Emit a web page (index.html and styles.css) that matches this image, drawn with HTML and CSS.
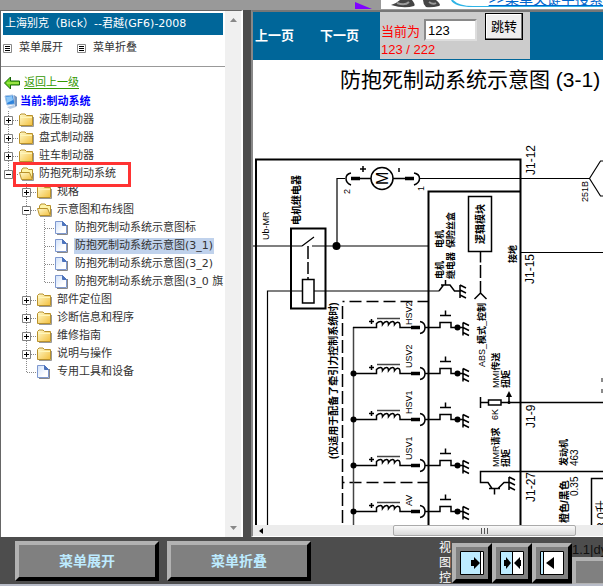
FILE: index.html
```
<!DOCTYPE html>
<html lang="zh-CN">
<head>
<meta charset="utf-8">
<title>防抱死制动系统示意图</title>
<link rel="stylesheet" href="styles.css">
</head>
<body>
<svg class="defs" aria-hidden="true">
  <defs>
    <linearGradient id="gold" x1="0" y1="0" x2="1" y2="1"><stop offset="0" stop-color="#fffbd0"/><stop offset="1" stop-color="#f3bf3c"/></linearGradient>
    <linearGradient id="sheet" x1="0" y1="0" x2="1" y2="1"><stop offset="0" stop-color="#cfe0fa"/><stop offset="0.7" stop-color="#fff"/></linearGradient>
    <symbol id="plus" viewBox="0 0 9 9"><path d="M.5 .5h8v8h-8z" fill="#fff" stroke="#808080"/><path d="M2 4.500h5M4.500 2v5" stroke="#000"/></symbol>
    <symbol id="minus" viewBox="0 0 9 9"><path d="M.5 .5h8v8h-8z" fill="#fff" stroke="#808080"/><path d="M2 4.500h5" stroke="#000"/></symbol>
    <symbol id="folder" viewBox="0 0 16 16"><path d="M2 14.500h12.500V5" fill="none" stroke="#999"/><path d="M.5 13.500v-10l1.500-1.500h4l1.500 1.500h6v10z" fill="url(#gold)" stroke="#b8912c"/><path d="M1 5.500h12" stroke="#fff6b8"/></symbol>
    <symbol id="open" viewBox="0 0 16 16"><path d="M3 14.500h11.500V7" fill="none" stroke="#999"/><path d="M2.500 12v-8l1.500-2h4l1.500 1.500h4v9z" fill="#fff4a6" stroke="#b8912c"/><path d="M.5 6.500h10l3 7h-11z" fill="url(#gold)" stroke="#b8912c"/></symbol>
    <symbol id="page" viewBox="0 0 16 16"><path d="M2 14.500h10.500V5" fill="none" stroke="#888"/><path d="M.5 1.500h7l4 4v8h-11z" fill="url(#sheet)" stroke="#7e98cf"/><path d="M7.500 1.500v4h4z" fill="#4d74bd" stroke="#4d74bd"/></symbol>
    <symbol id="list" viewBox="0 0 9 9"><path d="M.5 .5h8v8h-8z" fill="#fff" stroke="#888"/><path d="M2 2.500h5M2 4.500h5M2 6.500h5" stroke="#000"/></symbol>
  </defs>
</svg>

<header class="banner">
  <svg class="banner-art" viewBox="355 0 248 10" aria-hidden="true">
    <path d="M381 0h222v9H381z" fill="#fff"/>
    <path d="M355 2l17 7h-17z" fill="#8000ff"/>
    <path d="M391 5q6-2 9-5h12q4 5 2 6-10 3-23-1zM423 0h13q6 5 3 6-8 2-13 1-3-3-3-7z" fill="#444"/>
    <path d="M397 3q8 3 12-1M429 2q4 3 7 1" fill="none" stroke="#999" stroke-width="2"/>
    <path d="M453 0q6 6 20 6h130v1H473q-19 0-22-7z" fill="#2fb4e6"/>
  </svg>
  <a class="banner-link" href="#search">&gt;&gt;菜单关键字搜索</a>
</header>

<main class="frames">
  <aside class="menu">
    <div class="menu-body">
      <h2 class="car">上海别克（Bick）--君越(GF6)-2008</h2>
      <div class="tools">
        <button type="button"><svg class="sq"><use href="#list"/></svg>菜单展开</button>
        <button type="button"><svg class="sq"><use href="#list"/></svg>菜单折叠</button>
      </div>
      <div class="back">
        <svg class="ico" viewBox="0 0 16 14"><path d="M.5 7l6-6v4h9v4h-9v4z" fill="#6ad21c" stroke="#17640a"/><path d="M3 7h12" stroke="#c8f46a"/></svg>
        <a href="#up">返回上一级</a>
      </div>
      <div class="current">
        <svg class="ico" viewBox="0 0 16 16"><path d="M1 2l8-1 2 9-8 1z" fill="#2d83dd" stroke="#a7c4e6"/><path d="M2 3l6-1 1 4-6 3z" fill="#8cc7f8"/><path d="M10 1l3 2v9l-2 1z" fill="#7694bd"/><path d="M3 13l7-2 2 2-6 2z" fill="#b9cbe2"/></svg>
        <strong>当前:制动系统</strong>
      </div>
      <ul class="tree">
        <li><div class="row"><button type="button" class="tg" aria-label="展开"><svg class="sq"><use href="#plus"/></svg></button><i></i><svg class="ico"><use href="#folder"/></svg><a href="#a">液压制动器</a></div></li>
        <li><div class="row"><button type="button" class="tg" aria-label="展开"><svg class="sq"><use href="#plus"/></svg></button><i></i><svg class="ico"><use href="#folder"/></svg><a href="#b">盘式制动器</a></div></li>
        <li><div class="row"><button type="button" class="tg" aria-label="展开"><svg class="sq"><use href="#plus"/></svg></button><i></i><svg class="ico"><use href="#folder"/></svg><a href="#c">驻车制动器</a></div></li>
        <li><div class="row marked"><button type="button" class="tg" aria-label="折叠"><svg class="sq"><use href="#minus"/></svg></button><i></i><svg class="ico"><use href="#open"/></svg><a href="#d">防抱死制动系统</a></div>
          <ul>
            <li><div class="row"><button type="button" class="tg" aria-label="展开"><svg class="sq"><use href="#plus"/></svg></button><i></i><svg class="ico"><use href="#folder"/></svg><a href="#e">规格</a></div></li>
            <li><div class="row"><button type="button" class="tg" aria-label="折叠"><svg class="sq"><use href="#minus"/></svg></button><i></i><svg class="ico"><use href="#open"/></svg><a href="#f">示意图和布线图</a></div>
              <ul>
                <li><div class="row leaf"><i></i><svg class="ico"><use href="#page"/></svg><a href="#g">防抱死制动系统示意图标</a></div></li>
                <li><div class="row leaf"><i></i><svg class="ico"><use href="#page"/></svg><a class="on" href="#h">防抱死制动系统示意图(3_1)</a></div></li>
                <li><div class="row leaf"><i></i><svg class="ico"><use href="#page"/></svg><a href="#i">防抱死制动系统示意图(3_2)</a></div></li>
                <li><div class="row leaf"><i></i><svg class="ico"><use href="#page"/></svg><a href="#j">防抱死制动系统示意图(3_0 旗</a></div></li>
              </ul>
            </li>
            <li><div class="row"><button type="button" class="tg" aria-label="展开"><svg class="sq"><use href="#plus"/></svg></button><i></i><svg class="ico"><use href="#folder"/></svg><a href="#k">部件定位图</a></div></li>
            <li><div class="row"><button type="button" class="tg" aria-label="展开"><svg class="sq"><use href="#plus"/></svg></button><i></i><svg class="ico"><use href="#folder"/></svg><a href="#l">诊断信息和程序</a></div></li>
            <li><div class="row"><button type="button" class="tg" aria-label="展开"><svg class="sq"><use href="#plus"/></svg></button><i></i><svg class="ico"><use href="#folder"/></svg><a href="#m">维修指南</a></div></li>
            <li><div class="row"><button type="button" class="tg" aria-label="展开"><svg class="sq"><use href="#plus"/></svg></button><i></i><svg class="ico"><use href="#folder"/></svg><a href="#n">说明与操作</a></div></li>
            <li><div class="row leaf"><i></i><svg class="ico"><use href="#page"/></svg><a href="#o">专用工具和设备</a></div></li>
          </ul>
        </li>
      </ul>
    </div>
    <div class="vbar" aria-hidden="true">
      <svg viewBox="0 0 7 4"><path d="M0 4l3.500-4L7 4z" fill="#888"/></svg>
      <svg viewBox="0 0 7 4"><path d="M0 0l3.500 4L7 0z" fill="#888"/></svg>
    </div>
  </aside>

  <section class="viewer">
    <nav class="pager">
      <a href="#prev">上一页</a>
      <a href="#next">下一页</a>
      <form class="jump">
        <div class="jump-row">
          <label for="page-no">当前为</label>
          <input id="page-no" type="text" value="123">
          <button type="button">跳转</button>
        </div>
        <output>123 / 222</output>
      </form>
    </nav>
    <div class="sheet">
      <h1>防抱死制动系统示意图 (3-1)</h1>
      <svg class="diagram" viewBox="253 108 350 418" role="img" aria-label="防抱死制动系统示意图">
        <defs>
          <g id="gnd"><path d="M0-6V7M0-6l6 3M0-1l6 3M0 4l6 3" fill="none" stroke="#000" stroke-width="1.500"/></g>
          <g id="valve" fill="none" stroke="#000" stroke-width="1.500">
            <path d="M353 0h23.500v-4q2-2 4-2t2 3q2-3 4-3t2 3q2-3 4-3t2 3q2-3 4-2 1.500 0 1.500 4v1h11"/>
            <path d="M377-9h23" stroke="#444"/>
            <path d="M411 0h9" stroke-width="3.500"/>
            <path d="M420-6q5 1 5 6t-5 6M425.500 0H440v-5h11v5h5M440-12h11M445.500-17v5M459 0h4M369-6h5M371.500-8.500v5"/>
            <circle cx="457.500" cy="0" r="3" fill="#000" stroke="none"/>
            <use href="#gnd" x="463" y="1"/>
          </g>
        </defs>
        <g fill="none" stroke="#000" stroke-width="1.500">
          <path d="M256 526V159.500H520.500V526M428.500 526V191.500H520.500" stroke-width="2"/>
          <path d="M253 246h49M302 246l12-9M312 246h116M337 246v-67.500h8M267.500 526V291H302M314 291h125M521 252.500h82M420 178.500h169.500l11-17.500h3M589.500 178.500l11 17.500h3" stroke-width="1.200"/>
          <path d="M291 228.500h34.500v80H291z" stroke-width="2"/>
          <path d="M302.500 279.500h11.500v23.500h-11.500z"/>
          <path d="M308 246v13M308 262v12M308 277v2"/>
          <path d="M351 173q-5 1-5 5.500t5 6.500M360 178.500h11M393 178.500h12M414 173q5.500 1 5.500 5.500t-5.500 6.500M360 169h6M363 166v6M399 168v4"/>
          <path d="M351 178.500h9M405 178.500h9" stroke-width="3.500"/>
          <circle cx="382" cy="178.500" r="11"/>
          <path d="M468.500 196.500h23v55h-23zM480.500 251.500v11M480.500 265v13M480.500 281v12l-6 6M480.500 293l6 6"/>
          <path d="M439 291l4.500-6h-2.500 9l4.500 6h6M445.500 280v5"/>
          <path d="M342.500 301.500h86M342.500 482.500h86" stroke-dasharray="12 5" stroke-dashoffset="10"/>
          <path d="M342.500 306v220" stroke-dasharray="13 4"/>
          <path d="M353.500 327V526" stroke="#444"/>
          <path d="M480.500 397v11M480.500 402.500h8M501 402.500h102M488.500 400h12.500v5h-12.500zM509 402v-7"/>
          <path d="M603 471.500H480.500v11h7.500l4 6h6l6-6h5M489 488.500h11M494.500 488.500v6M603 478.500H591.500V526"/>
          <path d="M602 378v4M602 389v4" stroke="#666"/>
        </g>
        <path d="M506 397l3-6 3 6z"/>
        <circle cx="336.500" cy="246" r="4"/><circle cx="509" cy="402.500" r="1.500"/>
        <circle cx="353.500" cy="373.500" r="3"/><circle cx="353.500" cy="419.500" r="3"/><circle cx="353.500" cy="465.500" r="3"/><circle cx="353.500" cy="511.500" r="3"/>
        <use href="#gnd" x="460" y="291"/><use href="#gnd" x="509" y="483"/>
        <use href="#valve" y="327.500"/><use href="#valve" y="373.500"/><use href="#valve" y="419.500"/><use href="#valve" y="465.500"/><use href="#valve" y="511.500"/>
        <g class="t9">
          <text transform="translate(269 240) rotate(-90)">Ub-MR</text>
          <text transform="translate(350 194) rotate(-90)">2</text>
          <text transform="translate(424 191) rotate(-90)">1</text>
          <text transform="translate(412 325) rotate(-90)">HSV2</text>
          <text transform="translate(412 368) rotate(-90)">USV2</text>
          <text transform="translate(412 414) rotate(-90)">HSV1</text>
          <text transform="translate(412 460) rotate(-90)">USV1</text>
          <text transform="translate(412 506) rotate(-90)">AV</text>
          <text transform="translate(588 202) rotate(-90)">251B</text>
          <text transform="translate(498 420) rotate(-90)">6K</text>
        </g>
        <g class="b9">
          <text transform="translate(443 248) rotate(-90)">电机</text>
          <text transform="translate(454 248) rotate(-90)">保险丝盒</text>
          <text transform="translate(443 279) rotate(-90)">电机</text>
          <text transform="translate(454 279) rotate(-90)">继电器</text>
          <text transform="translate(516 263) rotate(-90)">接地</text>
          <text transform="translate(499 388) rotate(-90)"><tspan class="lat">MMI</tspan>传送</text>
          <text transform="translate(509 388) rotate(-90)">扭矩</text>
          <text transform="translate(485 367) rotate(-90)"><tspan class="lat">ABS_</tspan>模式<tspan class="lat">_</tspan>控制</text>
          <text transform="translate(499 467) rotate(-90)"><tspan class="lat">MMR</tspan>请求</text>
          <text transform="translate(509 467) rotate(-90)">扭矩</text>
          <text transform="translate(567 466) rotate(-90)">发动机</text>
        </g>
        <g class="b10">
          <text transform="translate(300 225) rotate(-90)">电机继电器</text>
          <text transform="translate(484 244) rotate(-90)">逻辑模块</text>
          <text transform="translate(337 459) rotate(-90)">(仅适用于配备了牵引力控制系统时)</text>
          <text transform="translate(568 523) rotate(-90)">橙色/黑色</text>
        </g>
        <g class="t10">
          <text transform="translate(578 466) rotate(-90)">463</text>
          <text transform="translate(578 496) rotate(-90)">0.35</text>
        </g>
        <g class="t12">
          <text transform="translate(606 529) rotate(-90)">3.0升</text>
          <text transform="translate(535 175) rotate(-90)">J1-12</text>
          <text transform="translate(534 284) rotate(-90)">J1-15</text>
          <text transform="translate(535 428) rotate(-90)">J1-9</text>
          <text transform="translate(535 502) rotate(-90)">J1-27</text>
        </g>
        <text class="t16" transform="translate(388 185) rotate(-90)">M</text>
      </svg>
    </div>
    <div class="hbar" aria-hidden="true">
      <svg viewBox="0 0 4 6"><path d="M4 0v6L0 3z" fill="#000"/></svg>
      <span class="thumb"><svg viewBox="0 0 8 6"><path d="M.5 0v6M3.500 0v6M6.500 0v6" stroke="#555"/></svg></span>
    </div>
  </section>
</main>

<footer class="dock">
  <button type="button" class="big">菜单展开</button>
  <button type="button" class="big">菜单折叠</button>
  <div class="views">
    <span class="views-name">视图控</span>
    <button type="button" class="view" aria-label="左侧视图"><svg viewBox="0 0 24 24"><path d="M.5 .5h23v23H.5z" fill="#fff"/><path d="M1 1h19v22H1z" fill="#bdebff"/><path d="M.5 .5h23v23H.5zM20.500 1v22" fill="none" stroke="#000"/><path d="M11 9h3V6l6 6-6 6v-3h-3z"/></svg></button>
    <button type="button" class="view" aria-label="双栏视图"><svg viewBox="0 0 24 24"><path d="M.5 .5h23v23H.5z" fill="#fff"/><path d="M1 1h11v22H1z" fill="#bdebff"/><path d="M.5 .5h23v23H.5zM12.500 1v22" fill="none" stroke="#000"/><path d="M4 9h2V6l5 6-5 6v-3H4zM21 9v6h-1v3l-6-6 6-6v3z"/></svg></button>
    <button type="button" class="view" aria-label="右侧视图"><svg viewBox="0 0 24 24"><path d="M.5 .5h23v23H.5z" fill="#fff"/><path d="M1 1h3v22H1z" fill="#bdebff"/><path d="M.5 .5h23v23H.5zM3.500 1v22" fill="none" stroke="#000"/><path d="M14 9V6l-8 6 8 6v-3h0V18v-3V9z"/><path d="M13 9h1v6h-1z"/></svg></button>
    <div class="version"><span>1.1|dy</span><div class="panel"></div></div>
  </div>
</footer>
</body>
</html>
```
FILE: styles.css
```
*, *::before, *::after { box-sizing: border-box; }

body {
  margin: 0;
  height: 100vh;
  display: grid;
  grid-template-columns: minmax(0, 1fr);
  grid-template-rows: 10px minmax(0, 1fr) 49px;
  overflow: hidden;
  background: #999;
  color: #333;
  font: 11px/18px "DejaVu Sans", "Noto Sans CJK SC", sans-serif;
}

button { margin: 0; padding: 0; color: inherit; font: inherit; }
a { color: inherit; text-decoration: none; white-space: nowrap; }
svg { display: block; flex: none; }
.defs { position: absolute; width: 0; height: 0; }
.sq { width: 9px; height: 9px; }
.ico { width: 16px; height: 16px; }

.banner { position: relative; display: flex; justify-content: flex-end; overflow: hidden; }
.banner-art { width: 248px; height: 10px; }
.banner-link {
  position: absolute;
  right: 0;
  bottom: 3px;
  color: #06c;
  font: 14px/15px "Liberation Sans", "Noto Sans CJK SC", sans-serif;
  text-decoration: underline;
}

.frames {
  display: grid;
  grid-template-columns: 243px minmax(0, 1fr);
  column-gap: 8px;
  background: #4d4d4d;
}

.menu {
  display: flex;
  min-width: 0;
  overflow: hidden;
  background: #fff;
  border-top: 1px solid #666;
  border-left: 1px solid #666;
  border-right: 2px solid #fff;
}
.menu-body { flex: 1; min-width: 0; overflow: hidden; padding: 2px 0; }
.car {
  margin: 0 2px;
  padding: 0 2px;
  background: #069;
  color: #fff;
  font: inherit;
  line-height: 22px;
  white-space: nowrap;
}
.tools {
  display: flex;
  gap: 14px;
  padding: 4px 2px 9px;
  border-bottom: 1px solid #999;
}
.tools button { display: flex; align-items: center; gap: 7px; border: 0; background: none; }
.back, .current { display: flex; align-items: center; padding-left: 3px; }
.back { gap: 4px; margin-top: 7px; color: #390; }
.back a { text-decoration: underline; text-underline-offset: 2px; }
.current { color: #00f; margin-top: 1px; }

.tree, .tree ul { margin: 0; padding: 0; list-style: none; }
.tree { padding-left: 3px; }
.tree ul { padding-left: 18px; }
.tree li {
  background: repeating-linear-gradient(#888 0 1px, transparent 1px 2px) 4px 0 / 1px 100% no-repeat;
}
.tree li:last-child { background-size: 1px 9px; }
.row { display: flex; align-items: center; height: 18px; }
.row i {
  flex: none;
  width: 6px;
  height: 1px;
  background: repeating-linear-gradient(90deg, #888 0 1px, transparent 1px 2px);
}
.row .leaf-gap { flex: none; }
.leaf i { width: 10px; margin-left: 5px; }
.row .ico { margin-right: 3px; }
.row a { padding: 0 1px; line-height: 16px; }
.row .on { background: #c0d2ec; }
.tg { flex: none; border: 0; background: none; }
.marked { position: relative; }
.marked::after {
  content: "";
  position: absolute;
  left: 9px;
  top: -3px;
  width: 118px;
  height: 25px;
  border: 3px solid #f33;
  pointer-events: none;
}

.vbar {
  flex: none;
  width: 16px;
  display: flex;
  flex-direction: column;
  justify-content: space-between;
  align-items: center;
  padding: 7px 0;
  background: #f0f0f0;
}
.vbar svg { width: 7px; height: 4px; }

.viewer {
  display: flex;
  flex-direction: column;
  min-width: 0;
  min-height: 0;
  border-top: 2px solid #777;
  border-left: 2px solid #888;
  border-bottom: 1px solid #fff;
  background: #fff;
}
.pager {
  display: flex;
  align-items: center;
  height: 48px;
  flex: none;
  background: #069;
  color: #fff;
  font: 13px/18px "Liberation Sans", "Noto Sans CJK SC", sans-serif;
}
.pager > a { margin-left: 2px; margin-right: 24px; font-weight: bold; }
.jump {
  align-self: stretch;
  width: 150px;
  margin-left: -3px;
  margin-bottom: 1px;
  padding: 1px;
  background: #ccc;
  color: #f00;
}
.jump-row { display: flex; align-items: flex-end; height: 28px; }
.jump label { margin-right: 4px; }
.jump input {
  width: 53px;
  height: 22px;
  margin-right: 8px;
  padding: 0 2px;
  border: 2px inset #ddd;
  background: #fff;
  color: #000;
  font: inherit;
}
.jump button {
  align-self: flex-start;
  width: 38px;
  height: 27px;
  border: 1px solid #000;
  box-shadow: inset -1px -1px #777, inset 1px 1px #fff;
  background: #eee;
  color: #000;
}
.jump output { display: block; line-height: 18px; }

.sheet { flex: 1; min-height: 0; overflow: hidden; }
.sheet h1 {
  margin: 0;
  height: 48px;
  padding-left: 87px;
  color: #000;
  font: 21px/40px "Liberation Sans", "Noto Sans CJK SC", sans-serif;
  white-space: nowrap;
}
.diagram {
  width: 350px;
  height: 418px;
  font-family: "Liberation Sans", "Noto Sans CJK SC", sans-serif;
}
.t9 { font-size: 9px; }
.t10 { font-size: 10px; }
.t12 { font-size: 12px; }
.t16 { font-size: 16px; }
.b9 { font-size: 9px; font-weight: bold; }
.b9 .lat { font-weight: normal; }
.b10 { font-size: 10px; font-weight: bold; }

.hbar {
  display: flex;
  align-items: center;
  flex: none;
  height: 11px;
  padding-left: 6px;
  background: #ececec;
}
.hbar > svg { width: 4px; height: 6px; }
.thumb {
  width: 183px;
  height: 11px;
  margin-left: 130px;
  display: grid;
  place-items: center;
  border: 1px solid #aaa;
  border-radius: 2px;
  background: linear-gradient(#fafafa, #d8d8d8);
}
.thumb svg { width: 8px; height: 6px; }

.dock {
  display: flex;
  align-items: flex-start;
  gap: 8px;
  min-width: 0;
  overflow: hidden;
  padding: 4px 0 0 15px;
  background: #4d4d4d;
  border-bottom: 2px solid #b8bcc8;
}
.big, .view {
  flex: none;
  border: 4px solid;
  border-color: #b2b2b2 #000 #000 #b2b2b2;
  background: #808080;
}
.big {
  width: 144px;
  height: 40px;
  color: #bdebff;
  font: bold 14px/20px "Liberation Sans", "Noto Sans CJK SC", sans-serif;
}
.views { flex: 1; display: flex; min-width: 0; margin-left: 120px; padding-top: 2px; }
.views-name {
  flex: none;
  width: 13px;
  height: 45px;
  margin-top: -2px;
  overflow: hidden;
  color: #fff;
  font-size: 12px;
  line-height: 15px;
  word-break: break-all;
}
.view { width: 40px; height: 40px; display: grid; place-items: center; }
.view svg { width: 24px; height: 24px; }
.version {
  flex: 1;
  min-width: 0;
  overflow: hidden;
  color: #111;
  font: 13px/14px "Liberation Sans", sans-serif;
}
.panel { height: 30px; border: 4px solid #b2b2b2; border-right: 0; background: #808080; }
```
